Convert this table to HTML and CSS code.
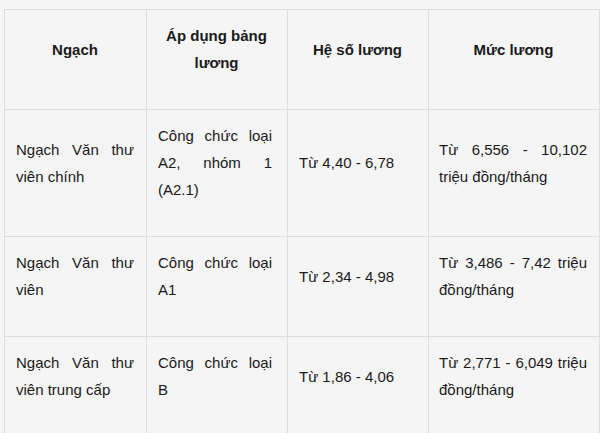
FILE: index.html
```html
<!DOCTYPE html>
<html lang="vi">
<head>
<meta charset="utf-8">
<link rel="stylesheet" href="styles.css">
</head>
<body>
<div class="wrap">
<table class="salary">
  <colgroup>
    <col class="c1"><col class="c2"><col class="c3"><col class="c4">
  </colgroup>
  <thead>
    <tr>
      <th><p>Ngạch</p></th>
      <th><p>Áp dụng bảng lương</p></th>
      <th><p>Hệ số lương</p></th>
      <th><p>Mức lương</p></th>
    </tr>
  </thead>
  <tbody>
    <tr>
      <td><p>Ngạch Văn thư viên chính</p></td>
      <td class="grade"><p>Công chức loại A2, nhóm 1 (A2.1)</p></td>
      <td><p>Từ 4,40 - 6,78</p></td>
      <td class="pay"><p>Từ 6,556 - 10,102 triệu đồng/tháng</p></td>
    </tr>
    <tr>
      <td><p>Ngạch Văn thư viên</p></td>
      <td class="grade"><p>Công chức loại A1</p></td>
      <td><p>Từ 2,34 - 4,98</p></td>
      <td class="pay"><p>Từ 3,486 - 7,42 triệu đồng/tháng</p></td>
    </tr>
    <tr>
      <td><p>Ngạch Văn thư viên trung cấp</p></td>
      <td class="grade"><p>Công chức loại B</p></td>
      <td><p>Từ 1,86 - 4,06</p></td>
      <td class="pay"><p>Từ 2,771 - 6,049 triệu đồng/tháng</p></td>
    </tr>
  </tbody>
</table>
</div>
</body>
</html>
```

FILE: styles.css
```css
html, body {
  margin: 0;
  padding: 0;
  background: #f5f5f5;
}
.wrap {
  padding: 9px 0 0 4px;
}
.salary {
  border-collapse: collapse;
  table-layout: fixed;
  width: 595px;
  font-family: "Liberation Sans", Arial, sans-serif;
  font-size: 15px;
  line-height: 27px;
  color: #1a1a1a;
}
.c1 { width: 142px; }
.c2 { width: 141px; }
.c3 { width: 141px; }
.c4 { width: 171px; }
.salary th, .salary td {
  border: 1px solid #dddddd;
  padding: 12px 12px 11px 11px;
  vertical-align: middle;
}
.salary th {
  font-weight: bold;
  text-align: center;
}
.salary td {
  text-align: justify;
}
.salary p {
  margin: 0 0 22px 0;
}
.salary td.grade {
  padding-right: 15px;
}
.salary td.pay {
  padding-left: 10px;
}
```
